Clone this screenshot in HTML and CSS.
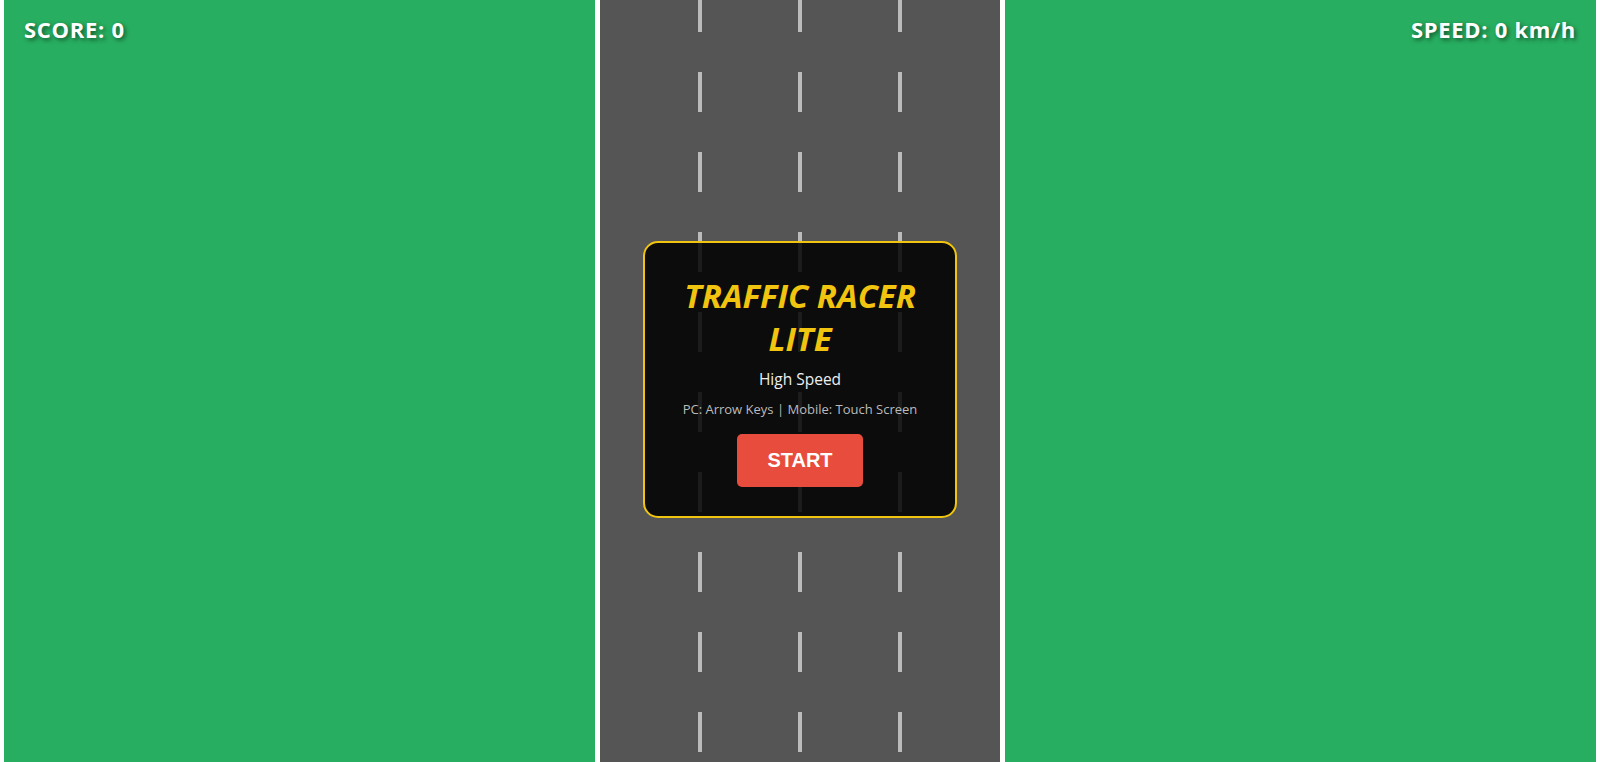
FILE: index.html
```html
<!DOCTYPE html>
<html lang="en">
<head>
<meta charset="utf-8">
<title>Traffic Racer Lite</title>
<link rel="stylesheet" href="styles.css">
</head>
<body>
<div class="game">
  <div class="hud">
    <div class="hud-item">SCORE: 0</div>
    <div class="hud-item">SPEED: 0 km/h</div>
  </div>
  <div class="road">
    <div class="lane-line"></div>
    <div class="lane-line"></div>
    <div class="lane-line"></div>
  </div>
  <div class="menu">
    <h1 class="menu-title">TRAFFIC RACER LITE</h1>
    <p class="menu-sub">High Speed</p>
    <p class="menu-hint">PC: Arrow Keys | Mobile: Touch Screen</p>
    <button class="start-btn">START</button>
  </div>
</div>
</body>
</html>
```

FILE: styles.css
```css
html, body {
  margin: 0;
  padding: 0;
  height: 100%;
  background: #ffffff;
  overflow: hidden;
}

.game {
  position: relative;
  height: 762px;
  margin: 0 4px;
  background: #27ae60;
  font-family: "Open Sans", "Noto Sans", sans-serif;
  display: flex;
  justify-content: center;
}

/* Road strip with white shoulders; lane lines every 100px */
.road {
  width: 302px;
  height: 100%;
  background: #555555;
  border-left: 5px solid #ffffff;
  border-right: 5px solid #ffffff;
  display: flex;
  gap: 96px;
  padding-left: 98px;
  box-sizing: content-box;
}

.lane-line {
  width: 4px;
  height: 100%;
  background: repeating-linear-gradient(to bottom, #bbbbbb 0 40px, transparent 40px 80px);
  background-size: 4px 80px;
  background-position: 0 -8px;
}

/* Score / speed overlay */
.hud {
  position: absolute;
  top: 0;
  left: 0;
  right: 0;
  display: flex;
  justify-content: space-between;
  padding: 14px 20px;
  z-index: 2;
}

.hud-item {
  color: #ffffff;
  font-weight: 700;
  font-size: 22px;
  letter-spacing: 0.7px;
  text-shadow: 2px 2px 4px rgba(0, 0, 0, 0.5);
}

/* Start menu overlay */
.menu {
  position: absolute;
  top: 241px;
  left: 50%;
  transform: translateX(-50%);
  box-sizing: border-box;
  width: 314px;
  height: 277px;
  padding: 31px 20px 0;
  background: rgba(0, 0, 0, 0.85);
  border: 2px solid #f1c40f;
  border-radius: 15px;
  text-align: center;
  z-index: 3;
}

.menu-title {
  margin: 0 auto;
  width: 260px;
  color: #f1c40f;
  font-size: 33px;
  font-style: italic;
  font-weight: 700;
  line-height: 43px;
}

.menu-sub {
  margin: 8px 0 0;
  color: #eeeeee;
  font-size: 15.5px;
  line-height: 22px;
}

.menu-hint {
  margin: 10px 0 0;
  color: #bbbbbb;
  font-size: 13px;
  line-height: 18px;
}

.start-btn {
  display: block;
  margin: 16px auto 0;
  width: 126px;
  height: 53px;
  padding: 0;
  background: #e74c3c;
  color: #ffffff;
  border: none;
  border-radius: 5px;
  font-family: "Liberation Sans", Arial, sans-serif;
  font-weight: 700;
  font-size: 20px;
  cursor: pointer;
}
```
